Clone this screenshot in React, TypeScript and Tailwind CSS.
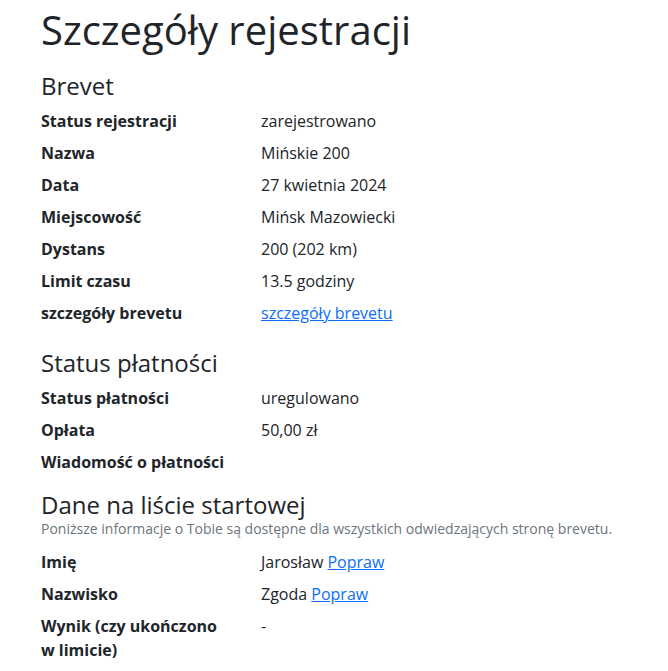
const Row = ({ label, children }: { label: React.ReactNode; children?: React.ReactNode }) => (
  <div className="flex">
    <div className="w-[220px] shrink-0 py-1 pr-[32px] font-bold leading-6">{label}</div>
    <div className="py-1 leading-6">{children}</div>
  </div>
);

const Link = ({ children }: { children: React.ReactNode }) => (
  <a href="#" className="text-[#0d6efd] underline">
    {children}
  </a>
);

export default function App() {
  return (
    <div className="min-h-screen bg-white px-[41px] pt-[6px] text-[16px] text-[#212529] [font-family:'Open_Sans',sans-serif]">
      <h1 className="text-[40px] leading-[1.2] font-normal">Szczegóły rejestracji</h1>

      {/* Brevet */}
      <h3 className="mt-[18px] text-[24px] leading-[1.2]">Brevet</h3>
      <div className="mt-[4px]">
        <Row label="Status rejestracji">zarejestrowano</Row>
        <Row label="Nazwa">Mińskie 200</Row>
        <Row label="Data">27 kwietnia 2024</Row>
        <Row label="Miejscowość">Mińsk Mazowiecki</Row>
        <Row label="Dystans">200 (202 km)</Row>
        <Row label="Limit czasu">13.5 godziny</Row>
        <Row label="szczegóły brevetu">
          <Link>szczegóły brevetu</Link>
        </Row>
      </div>

      {/* Płatność */}
      <h3 className="mt-[20px] text-[24px] leading-[1.2]">Status płatności</h3>
      <div className="mt-[4px]">
        <Row label="Status płatności">uregulowano</Row>
        <Row label="Opłata">50,00 zł</Row>
        <Row label="Wiadomość o płatności" />
      </div>

      {/* Lista startowa */}
      <h3 className="mt-[13px] text-[24px] leading-[1.2]">Dane na liście startowej</h3>
      <p className="text-[14px] leading-5 text-[#6c757d]">
        Poniższe informacje o Tobie są dostępne dla wszystkich odwiedzających stronę brevetu.
      </p>
      <div className="mt-[7px]">
        <Row label="Imię">
          Jarosław <Link>Popraw</Link>
        </Row>
        <Row label="Nazwisko">
          Zgoda <Link>Popraw</Link>
        </Row>
        <Row label="Wynik (czy ukończono w limicie)">-</Row>
      </div>
    </div>
  );
}
